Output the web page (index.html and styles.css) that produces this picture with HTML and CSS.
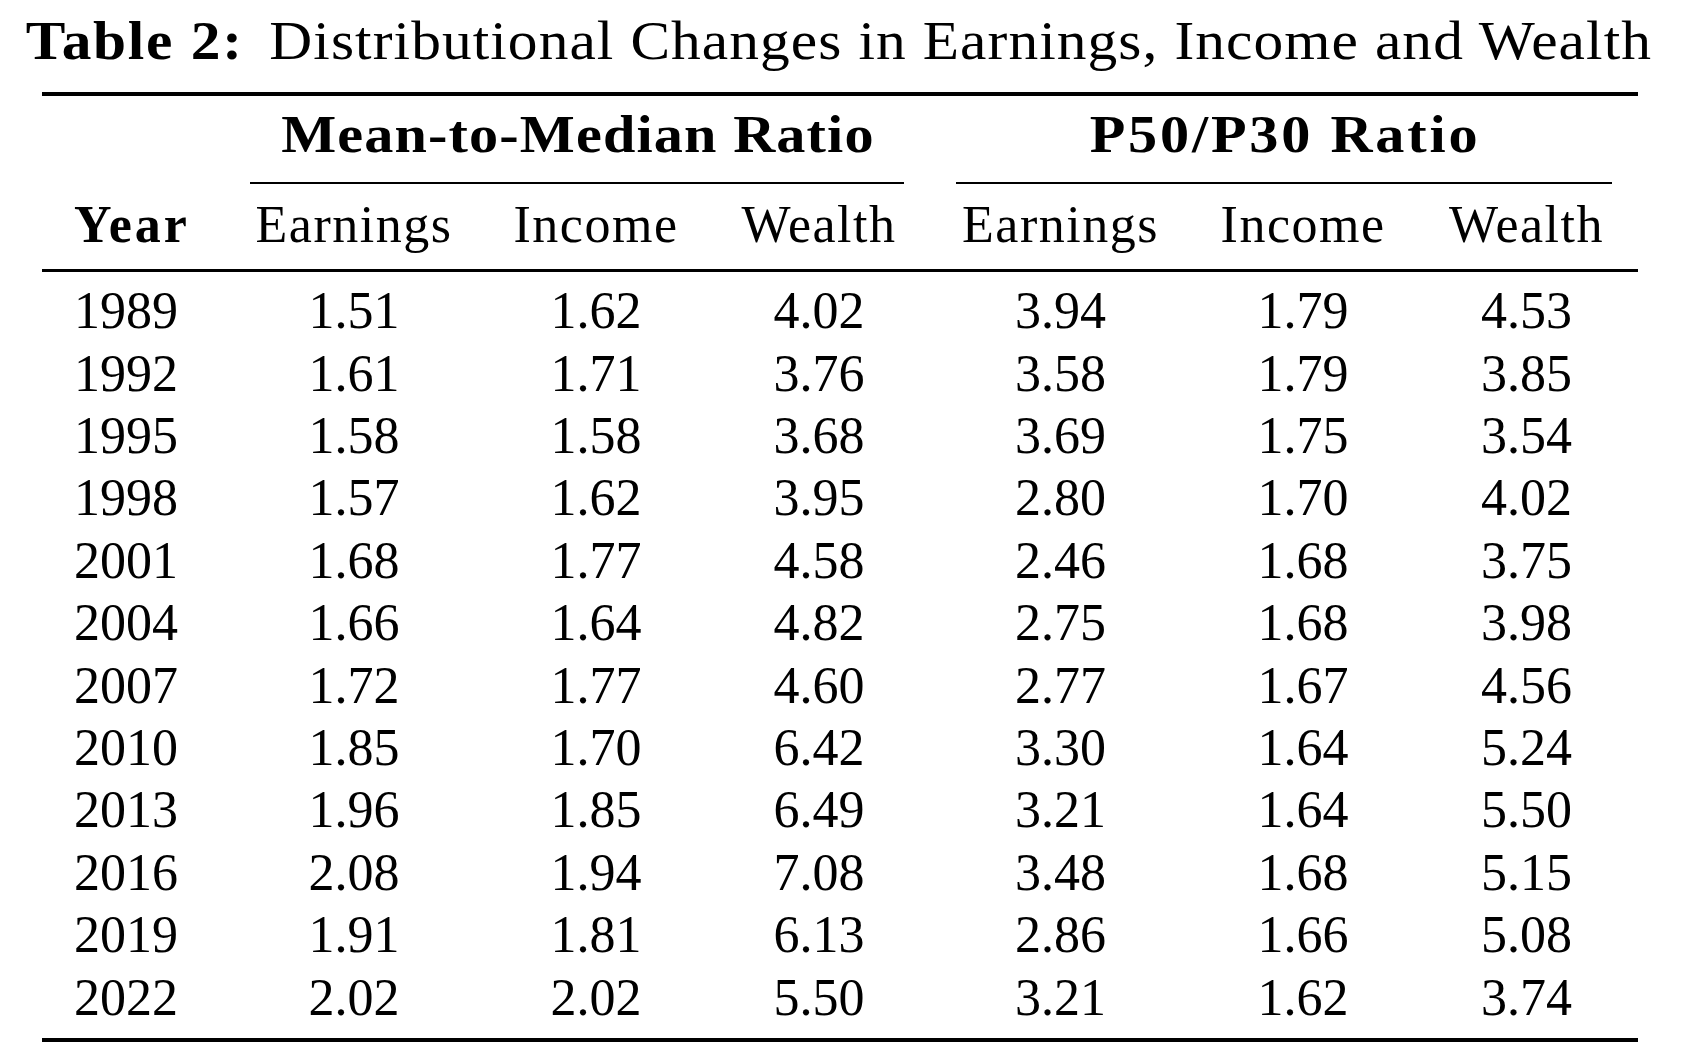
FILE: index.html
```html
<!DOCTYPE html>
<html lang="en">
<head>
<meta charset="utf-8">
<title>Table 2</title>
<link rel="stylesheet" href="styles.css">
</head>
<body>
<div class="page">
  <p class="caption"><span class="cap-text"><span class="cap-label">Table 2:</span> Distributional Changes in Earnings, Income and Wealth</span></p>
  <table class="tbl">
    <colgroup>
      <col class="c0"><col class="c1"><col class="c2"><col class="c3"><col class="c4"><col class="c5"><col class="c6">
    </colgroup>
    <thead>
      <tr class="grp">
        <th></th>
        <th colspan="3"><div class="glabel"><span class="gtext g1">Mean-to-Median Ratio</span></div><div class="cmid"></div></th>
        <th colspan="3"><div class="glabel"><span class="gtext g2">P50/P30 Ratio</span></div><div class="cmid"></div></th>
      </tr>
      <tr class="hdr">
        <th class="yr">Year</th>
        <th>Earnings</th><th>Income</th><th>Wealth</th>
        <th>Earnings</th><th>Income</th><th>Wealth</th>
      </tr>
    </thead>
    <tbody>
      <tr><td class="yr">1989</td><td>1.51</td><td>1.62</td><td>4.02</td><td>3.94</td><td>1.79</td><td>4.53</td></tr>
      <tr><td class="yr">1992</td><td>1.61</td><td>1.71</td><td>3.76</td><td>3.58</td><td>1.79</td><td>3.85</td></tr>
      <tr><td class="yr">1995</td><td>1.58</td><td>1.58</td><td>3.68</td><td>3.69</td><td>1.75</td><td>3.54</td></tr>
      <tr><td class="yr">1998</td><td>1.57</td><td>1.62</td><td>3.95</td><td>2.80</td><td>1.70</td><td>4.02</td></tr>
      <tr><td class="yr">2001</td><td>1.68</td><td>1.77</td><td>4.58</td><td>2.46</td><td>1.68</td><td>3.75</td></tr>
      <tr><td class="yr">2004</td><td>1.66</td><td>1.64</td><td>4.82</td><td>2.75</td><td>1.68</td><td>3.98</td></tr>
      <tr><td class="yr">2007</td><td>1.72</td><td>1.77</td><td>4.60</td><td>2.77</td><td>1.67</td><td>4.56</td></tr>
      <tr><td class="yr">2010</td><td>1.85</td><td>1.70</td><td>6.42</td><td>3.30</td><td>1.64</td><td>5.24</td></tr>
      <tr><td class="yr">2013</td><td>1.96</td><td>1.85</td><td>6.49</td><td>3.21</td><td>1.64</td><td>5.50</td></tr>
      <tr><td class="yr">2016</td><td>2.08</td><td>1.94</td><td>7.08</td><td>3.48</td><td>1.68</td><td>5.15</td></tr>
      <tr><td class="yr">2019</td><td>1.91</td><td>1.81</td><td>6.13</td><td>2.86</td><td>1.66</td><td>5.08</td></tr>
      <tr><td class="yr">2022</td><td>2.02</td><td>2.02</td><td>5.50</td><td>3.21</td><td>1.62</td><td>3.74</td></tr>
    </tbody>
  </table>
</div>
</body>
</html>
```
FILE: styles.css
```css
html, body {
  margin: 0;
  padding: 0;
  background: #ffffff;
}

body {
  width: 1693px;
  height: 1060px;
  overflow: hidden;
  color: #000000;
  font-family: "Liberation Serif", "Times New Roman", serif;
}

.page {
  padding-top: 6px;
}

.caption {
  margin: 0;
  padding-right: 15px;
  height: 70px;
  line-height: 70px;
  font-size: 55px;
  text-align: center;
  white-space: nowrap;
}

.cap-text {
  display: inline-block;
  letter-spacing: 1px;
  transform: scaleX(1.08);
  transform-origin: center;
}

.cap-label {
  font-weight: bold;
  letter-spacing: 1.6px;
  margin-right: 9px;
}

.tbl {
  margin: 16px 0 0 42px;
  width: 1596px;
  table-layout: fixed;
  border-collapse: separate;
  border-spacing: 0;
  border-top: 4px solid #000;
  border-bottom: 4px solid #000;
  font-size: 52px;
  line-height: 62.4px;
}

.c0 { width: 182px; }
.c1 { width: 260px; }
.c2 { width: 224px; }
.c3 { width: 222px; }
.c4 { width: 261px; }
.c5 { width: 224px; }
.c6 { width: 223px; }

.tbl th,
.tbl td {
  padding: 0;
  text-align: center;
  white-space: nowrap;
  vertical-align: top;
}

.grp th {
  padding-top: 8.25px;
  font-weight: bold;
}

.glabel {
  height: 62.4px;
}

.gtext {
  display: inline-block;
  transform: scaleX(1.12);
  transform-origin: center;
}

.g1 {
  letter-spacing: 1px;
  padding-left: 1px;
}

.g2 {
  letter-spacing: 2.5px;
  padding-left: 2.5px;
}

.cmid {
  margin: 15.35px 26px 0 26px;
  border-top: 2px solid #000;
}

.hdr th {
  padding-top: 10.25px;
  padding-bottom: 12.35px;
  border-bottom: 3px solid #000;
  font-weight: normal;
  letter-spacing: 1.5px;
}

.hdr th.yr {
  font-weight: bold;
  letter-spacing: 3px;
}

.tbl .yr {
  text-align: left;
  padding-left: 32px;
}

.tbl tbody tr:first-child td {
  padding-top: 8.25px;
}

.tbl tbody tr:last-child td {
  padding-bottom: 9px;
}
```
